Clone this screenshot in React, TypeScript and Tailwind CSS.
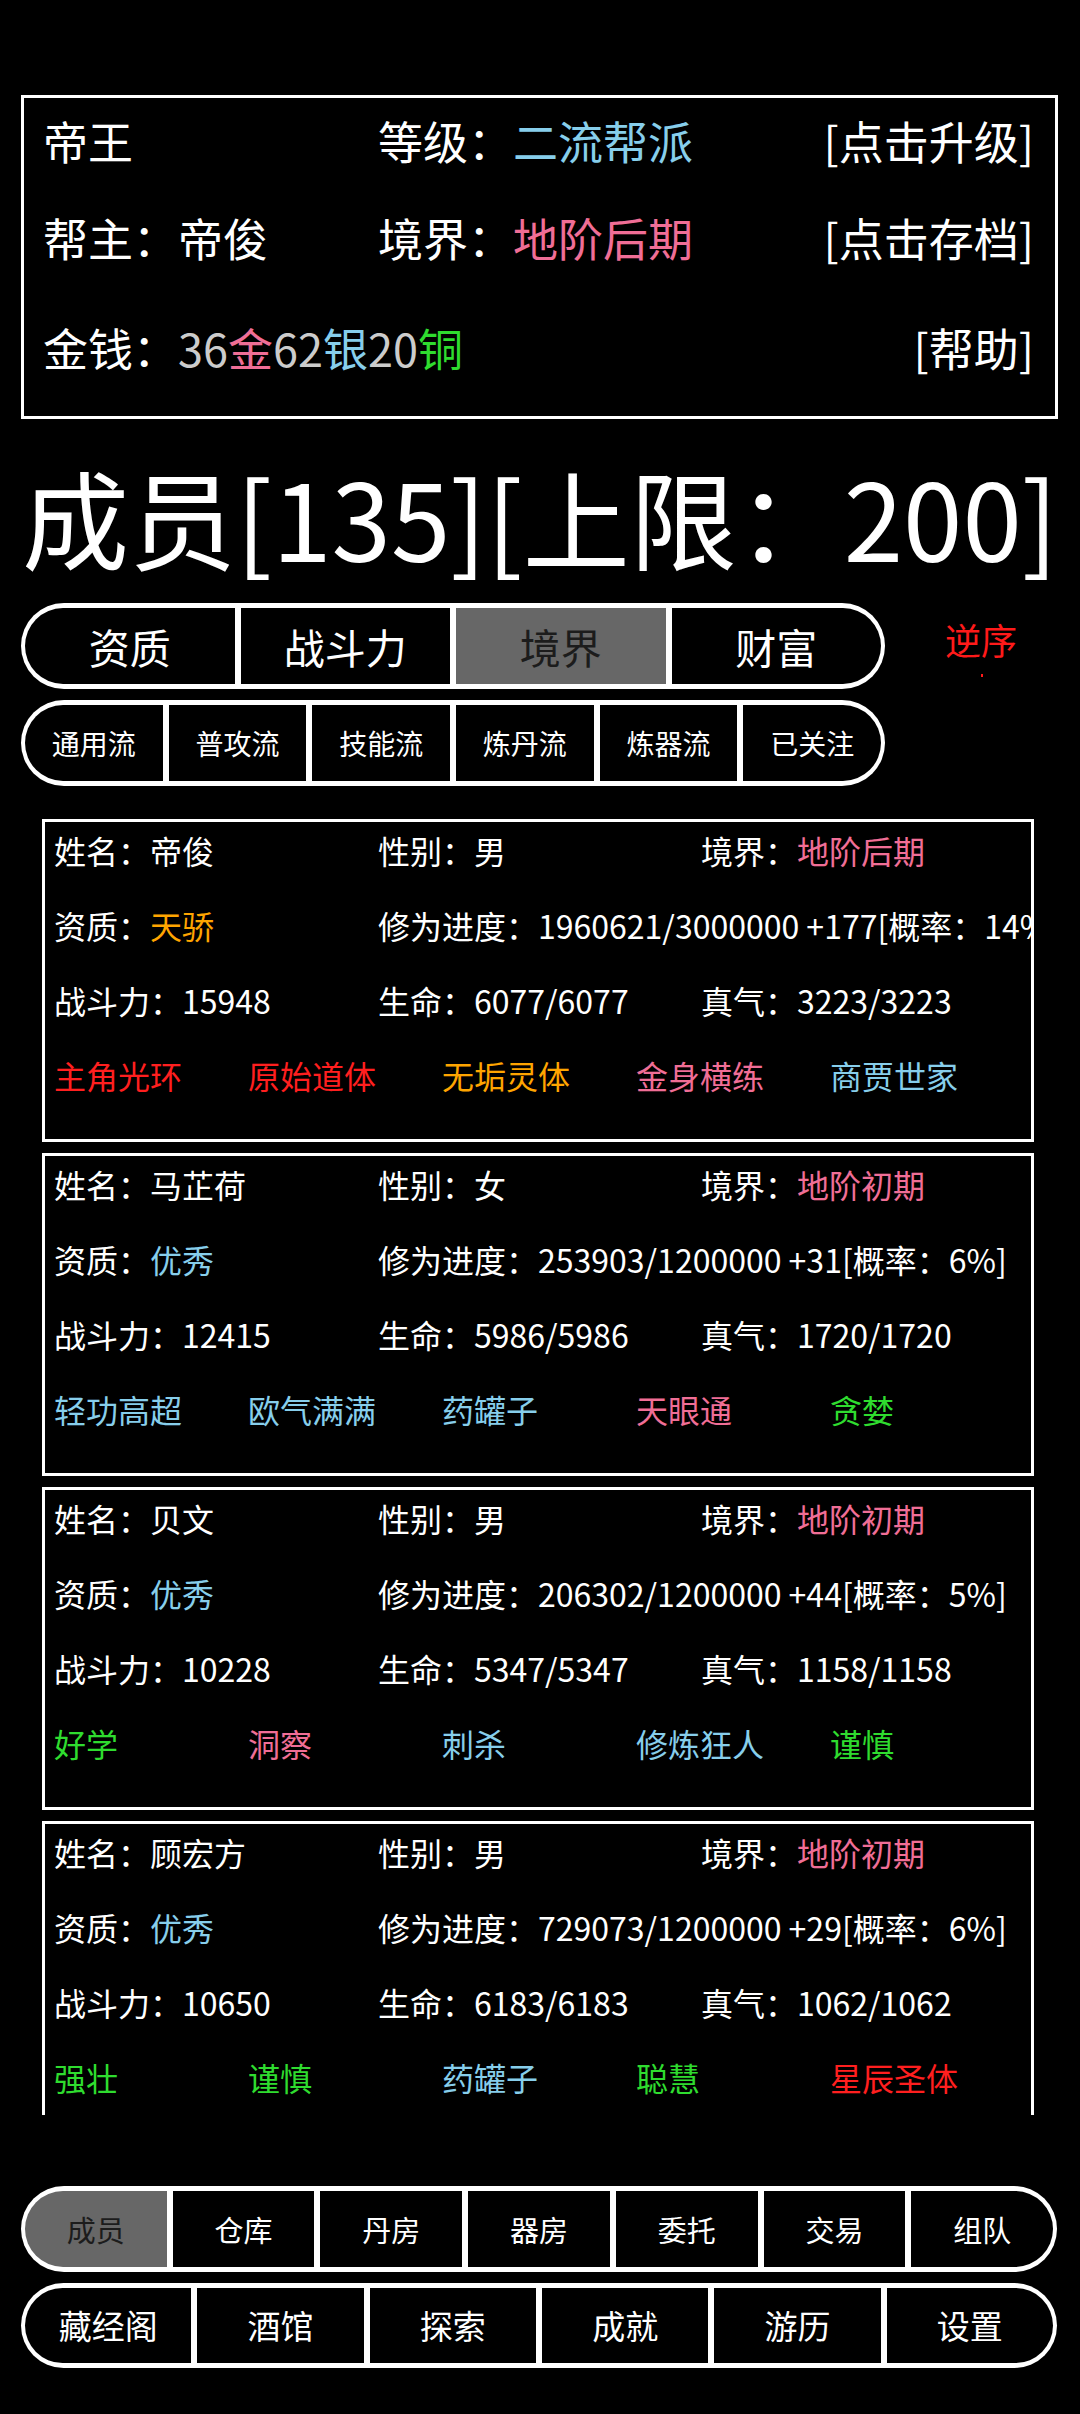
import React from "react";

const PINK = "text-[#f06e96]";
const SKY = "text-[#87ceeb]";
const ORANGE = "text-[#ffa500]";
const RED = "text-[#ff1f1f]";
const GREEN = "text-[#2fdc2f]";

type Member = {
  name: string;
  sex: string;
  realm: string;
  apt: string;
  aptC: string;
  prog: string;
  power: string;
  hp: string;
  qi: string;
  traits: [string, string][];
};

const members: Member[] = [
  {
    name: "帝俊",
    sex: "男",
    realm: "地阶后期",
    apt: "天骄",
    aptC: ORANGE,
    prog: "1960621/3000000 +177[概率：14%]",
    power: "15948",
    hp: "6077/6077",
    qi: "3223/3223",
    traits: [
      ["主角光环", RED],
      ["原始道体", RED],
      ["无垢灵体", ORANGE],
      ["金身横练", PINK],
      ["商贾世家", SKY],
    ],
  },
  {
    name: "马芷荷",
    sex: "女",
    realm: "地阶初期",
    apt: "优秀",
    aptC: SKY,
    prog: "253903/1200000 +31[概率：6%]",
    power: "12415",
    hp: "5986/5986",
    qi: "1720/1720",
    traits: [
      ["轻功高超", SKY],
      ["欧气满满", SKY],
      ["药罐子", SKY],
      ["天眼通", PINK],
      ["贪婪", GREEN],
    ],
  },
  {
    name: "贝文",
    sex: "男",
    realm: "地阶初期",
    apt: "优秀",
    aptC: SKY,
    prog: "206302/1200000 +44[概率：5%]",
    power: "10228",
    hp: "5347/5347",
    qi: "1158/1158",
    traits: [
      ["好学", GREEN],
      ["洞察", PINK],
      ["刺杀", SKY],
      ["修炼狂人", SKY],
      ["谨慎", GREEN],
    ],
  },
  {
    name: "顾宏方",
    sex: "男",
    realm: "地阶初期",
    apt: "优秀",
    aptC: SKY,
    prog: "729073/1200000 +29[概率：6%]",
    power: "10650",
    hp: "6183/6183",
    qi: "1062/1062",
    traits: [
      ["强壮", GREEN],
      ["谨慎", GREEN],
      ["药罐子", SKY],
      ["聪慧", GREEN],
      ["星辰圣体", RED],
    ],
  },
];

function Bar({
  items,
  active,
  textClass,
  className,
}: {
  items: string[];
  active: number;
  textClass: string;
  className: string;
}) {
  return (
    <div className={`flex gap-[6px] rounded-full bg-white px-[4px] py-[5px] ${className}`}>
      {items.map((t, i) => {
        const first = i === 0 ? "rounded-l-full" : "";
        const last = i === items.length - 1 ? "rounded-r-full" : "";
        const act = i === active ? "bg-[#676767] text-[#1c1c1c]" : "bg-black text-white";
        return (
          <div
            key={t}
            className={`flex flex-1 items-center justify-center leading-none whitespace-nowrap ${textClass} ${first} ${last} ${act}`}
          >
            {t}
          </div>
        );
      })}
    </div>
  );
}

function Card({ m }: { m: Member }) {
  return (
    <div className="flex h-[323px] w-[992px] shrink-0 flex-col gap-[19px] overflow-hidden border-[3px] border-white pl-[9px] text-[32px] leading-none text-white">
      <div className="flex h-[56px] items-center whitespace-nowrap">
        <div className="w-[324px]">姓名：{m.name}</div>
        <div className="w-[323px]">性别：{m.sex}</div>
        <div>
          境界：<span className={PINK}>{m.realm}</span>
        </div>
      </div>
      <div className="flex h-[56px] items-center whitespace-nowrap">
        <div className="w-[324px] shrink-0">
          资质：<span className={m.aptC}>{m.apt}</span>
        </div>
        <div className="shrink-0">修为进度：{m.prog}</div>
      </div>
      <div className="flex h-[56px] items-center whitespace-nowrap">
        <div className="w-[324px]">战斗力：{m.power}</div>
        <div className="w-[323px]">生命：{m.hp}</div>
        <div>真气：{m.qi}</div>
      </div>
      <div className="flex h-[56px] items-center whitespace-nowrap">
        {m.traits.map(([t, c], i) => (
          <div key={i} className={`w-[194px] ${c}`}>
            {t}
          </div>
        ))}
      </div>
    </div>
  );
}

export default function App() {
  return (
    <div className="h-[2414px] w-[1080px] overflow-hidden bg-black text-white [font-family:'Noto_Sans_CJK_SC','Noto_Sans',sans-serif]">
      {/* top panel */}
      <div className="ml-[21px] mt-[95px] h-[324px] w-[1037px] border-[3px] border-white pl-[19px] pr-[21px] pt-[12px] text-[45px] leading-none">
        <div className="flex h-[60px] items-center whitespace-nowrap">
          <div className="w-[335px]">帝王</div>
          <div className="flex-1">
            等级：<span className={SKY}>二流帮派</span>
          </div>
          <div>[点击升级]</div>
        </div>
        <div className="mt-[37px] flex h-[60px] items-center whitespace-nowrap">
          <div className="w-[335px]">帮主：帝俊</div>
          <div className="flex-1">
            境界：<span className={PINK}>地阶后期</span>
          </div>
          <div>[点击存档]</div>
        </div>
        <div className="mt-[50px] flex h-[60px] items-center whitespace-nowrap">
          <div className="flex-1">
            金钱：<span className="text-[#cccccc]">36</span>
            <span className={PINK}>金</span>
            <span className="text-[#cccccc]">62</span>
            <span className={SKY}>银</span>
            <span className="text-[#cccccc]">20</span>
            <span className={GREEN}>铜</span>
          </div>
          <div>[帮助]</div>
        </div>
      </div>

      {/* title */}
      <div className="mt-[31px] flex h-[130px] items-center whitespace-nowrap pl-[22px] text-[107px] leading-none">
        成员[135][上限：200]
      </div>

      {/* sort bar */}
      <div className="mt-[23px] flex">
        <Bar
          items={["资质", "战斗力", "境界", "财富"]}
          active={2}
          textClass="text-[41px]"
          className="ml-[21px] h-[86px] w-[864px]"
        />
        <div className="ml-[60px] mt-[18px] flex flex-col">
          <div className="text-[36px] leading-none text-[#ff1a1a]">逆序</div>
          <div className="ml-[36px] mt-[17px] h-[3px] w-[2px] bg-[#ff1a1a]" />
        </div>
      </div>

      {/* filter bar */}
      <Bar
        items={["通用流", "普攻流", "技能流", "炼丹流", "炼器流", "已关注"]}
        active={-1}
        textClass="text-[28px]"
        className="ml-[21px] mt-[11px] h-[86px] w-[864px]"
      />

      {/* member list */}
      <div className="flex h-[1329px] flex-col gap-[11px] overflow-hidden pl-[42px] pt-[33px]">
        {members.map((m) => (
          <Card key={m.name} m={m} />
        ))}
      </div>

      {/* bottom nav */}
      <Bar
        items={["成员", "仓库", "丹房", "器房", "委托", "交易", "组队"]}
        active={0}
        textClass="text-[29px]"
        className="ml-[21px] mt-[71px] h-[86px] w-[1036px]"
      />
      <Bar
        items={["藏经阁", "酒馆", "探索", "成就", "游历", "设置"]}
        active={-1}
        textClass="text-[33px]"
        className="ml-[21px] mt-[11px] h-[85px] w-[1036px]"
      />
    </div>
  );
}
